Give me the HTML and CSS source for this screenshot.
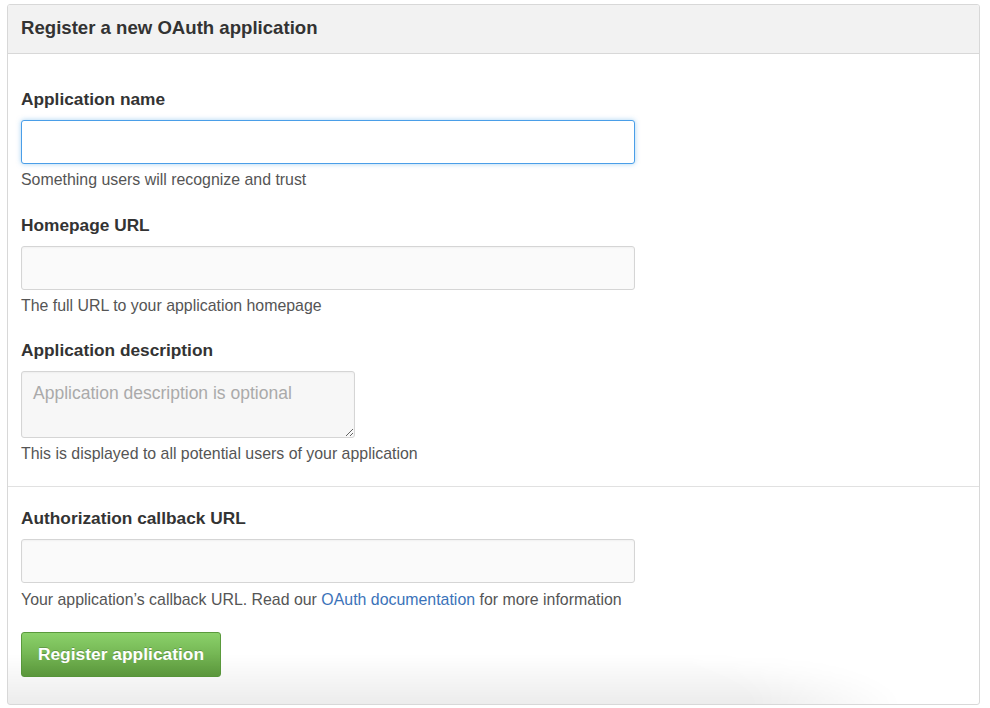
FILE: index.html
```html
<!DOCTYPE html>
<html>
<head>
<meta charset="utf-8">
<link rel="stylesheet" href="styles.css">
</head>
<body>
<div class="page">
  <div class="panel">
    <div class="panel-head">Register a new OAuth application</div>
    <form class="panel-body">
      <div class="section">
        <div class="group">
          <label class="label">Application name</label>
          <input class="input input-focus" type="text">
          <p class="hint">Something users will recognize and trust</p>
        </div>
        <div class="group group-2">
          <label class="label">Homepage URL</label>
          <input class="input" type="text">
          <p class="hint">The full URL to your application homepage</p>
        </div>
        <div class="group group-3">
          <label class="label">Application description</label>
          <textarea class="textarea" placeholder="Application description is optional"></textarea>
          <p class="hint">This is displayed to all potential users of your application</p>
        </div>
      </div>
      <div class="section section-last">
        <div class="group">
          <label class="label">Authorization callback URL</label>
          <input class="input" type="text">
          <p class="hint hint-last">Your application’s callback URL. Read our <a class="link" href="#">OAuth documentation</a> for more information</p>
        </div>
        <button class="btn" type="button">Register application</button>
      </div>
    </form>
  </div>
</div>
</body>
</html>
```

FILE: styles.css
```css
* { box-sizing: border-box; }
html, body { margin: 0; padding: 0; background: #fff; }
body {
  font-family: "Liberation Sans", Arial, Helvetica, sans-serif;
  color: #333;
}
.page {
  padding: 4px 0 0 7px;
  width: 980px;
}
.panel {
  position: relative;
  width: 973px;
  height: 701px;
  border: 1px solid #d8d8d8;
  border-radius: 3px;
  overflow: hidden;
  background: #fff;
}
.panel::after {
  content: "";
  position: absolute;
  left: 0;
  right: 0;
  bottom: 0;
  height: 50px;
  background: linear-gradient(rgba(0,0,0,0), rgba(0,0,0,0.075));
  -webkit-mask-image: radial-gradient(ellipse 62% 190% at 30% 100%, #000 75%, transparent 100%);
  mask-image: radial-gradient(ellipse 62% 190% at 30% 100%, #000 75%, transparent 100%);
  pointer-events: none;
}
.panel-head {
  height: 49px;
  background: #f2f2f2;
  border-bottom: 1px solid #d8d8d8;
  padding: 0 13px;
  font-size: 18.6px;
  font-weight: bold;
  line-height: 46px;
  color: #333;
}
.panel-body {
  margin: 0;
}
.section {
  padding: 34px 13px 22px;
  border-bottom: 1px solid #e1e1e1;
}
.section-last {
  border-bottom: none;
  padding-top: 20px;
}
.group-2 {
  margin-top: 24px;
}
.group-3 {
  margin-top: 23px;
}
.label {
  display: block;
  font-size: 17.3px;
  font-weight: bold;
  line-height: 22px;
  margin-bottom: 10px;
  color: #333;
}
.input {
  display: block;
  width: 614px;
  height: 44px;
  margin: 0;
  padding: 8px 12px;
  font: 15px "Liberation Sans", Arial, sans-serif;
  background: #fafafa;
  border: 1px solid #d5d5d5;
  border-radius: 3px;
  box-shadow: inset 0 1px 2px rgba(0,0,0,0.04);
  outline: none;
}
.input-focus {
  background: #fff;
  border-color: #4a9ee8;
  box-shadow: 0 0 5px rgba(81,167,232,0.5);
}
.textarea {
  display: block;
  width: 334px;
  height: 67px;
  margin: 0;
  padding: 10px 11px;
  font: 17.5px/22px "Liberation Sans", Arial, sans-serif;
  color: #333;
  background: #f7f7f7;
  border: 1px solid #d5d5d5;
  border-radius: 3px;
  box-shadow: inset 0 1px 2px rgba(0,0,0,0.04);
  outline: none;
}
.textarea::placeholder {
  color: #aaa;
}
.hint {
  margin: 6px 0 0;
  font-size: 15.9px;
  line-height: 20px;
  color: #555;
}
.hint-last {
  margin-top: 7px;
}
.link {
  color: #3b73b9;
  text-decoration: none;
}
.btn {
  display: block;
  margin-top: 22px;
  width: 200px;
  height: 45px;
  padding: 0;
  font: bold 17.4px "Liberation Sans", Arial, sans-serif;
  color: #fff;
  text-shadow: 0 -1px 0 rgba(0,0,0,0.2);
  background: linear-gradient(#8bd16a, #5e9c3e);
  border: 1px solid #5a9a3c;
  border-radius: 3px;
  cursor: pointer;
}
```
